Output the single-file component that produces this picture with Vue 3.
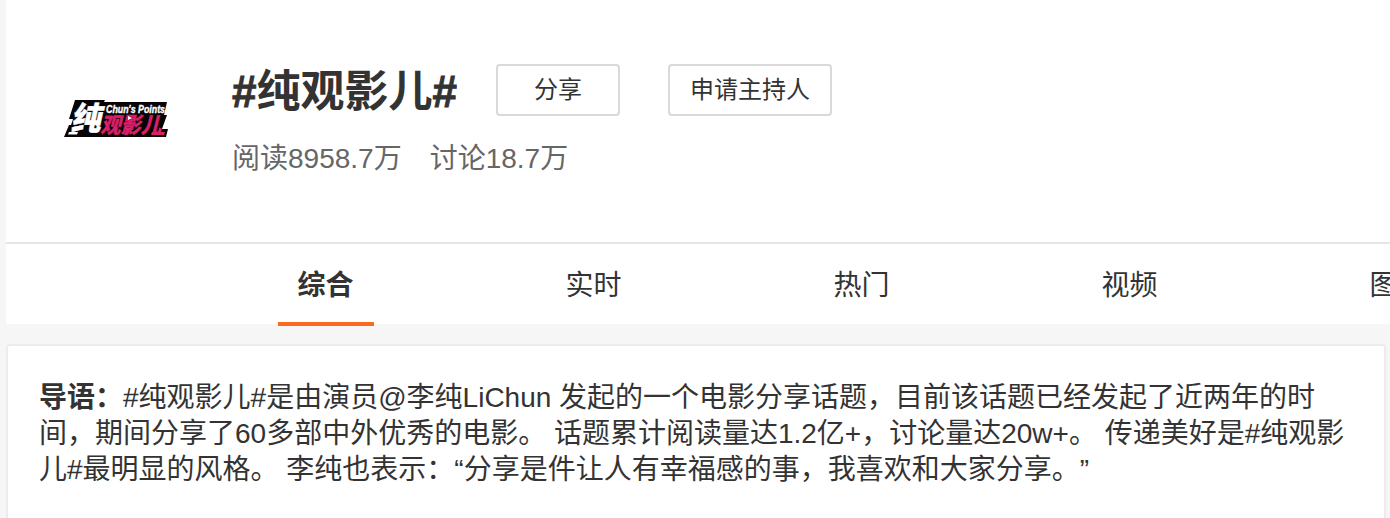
<script setup>
const tabs = ['综合', '实时', '热门', '视频', '图片']
const lines = [
  '#纯观影儿#是由演员@李纯LiChun 发起的一个电影分享话题，目前该话题已经发起了近两年的时',
  '间，期间分享了60多部中外优秀的电影。 话题累计阅读量达1.2亿+，讨论量达20w+。 传递美好是#纯观影',
  '儿#最明显的风格。 李纯也表示：“分享是件让人有幸福感的事，我喜欢和大家分享。”'
]
</script>

<template>
  <main class="page">
    <section class="panel">
      <header class="topic">
        <svg class="logo" viewBox="0 0 104 40" width="104" height="40">
          <path d="M11 1 H41 L40 3 H103 L100 16 H103 L98 30 H104 L102 38 H0 L5 26 H7 L9 20 H5 Z" fill="#080406" />
          <g transform="translate(6 33) skewX(-12)">
            <text class="cn white" transform="scale(.94 1)" x="0" y="-2" font-size="32">纯</text>
          </g>
          <path d="M5 33 H14 L13 35.5 H4 Z" fill="#fff" />
          <g transform="translate(36 35) skewX(-14)">
            <text class="cn pink" transform="scale(.92 1)" x="0" y="-1" font-size="22">观影儿</text>
          </g>
          <path d="M88 33 H101 L100 36 H87 Z" fill="#d82068" />
          <text class="en" x="42" y="13.5" font-size="11.5" textLength="59" lengthAdjust="spacingAndGlyphs">Chun's Points</text>
          <path d="M64 17 L68 19 L64 21 Z" fill="#fff" />
        </svg>
        <div class="info">
          <div class="heading">
            <h1><span class="hash">#</span>纯观影儿<span class="hash">#</span></h1>
            <button class="share">分享</button>
            <button class="host">申请主持人</button>
          </div>
          <div class="stats"><span>阅读8958.7万</span><span>讨论18.7万</span></div>
        </div>
      </header>
      <nav class="tabs">
        <a v-for="(t, i) in tabs" :key="t" :class="['tab', { active: i === 0 }]">{{ t }}</a>
      </nav>
    </section>
    <section class="intro">
      <p v-for="(l, i) in lines" :key="i"><b v-if="i === 0">导语：</b>{{ l }}</p>
    </section>
  </main>
</template>

<style>
body { margin: 0; background: #f6f6f6; overflow: hidden; }
</style>

<style scoped>
.page {
  box-sizing: border-box;
  height: 518px;
  padding-left: 6px;
  overflow: hidden;
  background: #f6f6f6;
  color: #333;
  font-family: "Liberation Sans", "Noto Sans CJK SC", sans-serif;
  text-spacing-trim: space-all;
}
.panel { height: 324px; background: #fff; }
.topic {
  box-sizing: border-box;
  height: 244px;
  display: flex;
  padding-left: 58px;
  border-bottom: 2px solid #e5e5e5;
}
.logo { flex: none; margin-top: 99px; overflow: visible; }
.cn { font-family: "Noto Sans CJK SC", sans-serif; font-weight: 900; }
.white { fill: #fff; stroke: #fff; stroke-width: .5; }
.pink { fill: #d82068; stroke: #d82068; stroke-width: .3; }
.en { font-family: "Liberation Sans", sans-serif; font-weight: 700; font-style: italic; fill: #fff; stroke: #fff; stroke-width: .4; }
.info { margin-left: 64px; padding-top: 64px; }
.heading { display: flex; height: 52px; align-items: center; }
h1 { margin: 0; padding-top: 3px; width: 264px; font-size: 44px; line-height: 52px; font-weight: 700; white-space: nowrap; }
.hash { -webkit-text-stroke: .9px #333; }
button {
  box-sizing: border-box;
  height: 52px;
  padding: 0;
  border: 2px solid #d9d9d9;
  border-radius: 4px;
  background: #fff;
  color: #333;
  font: 24px/48px "Liberation Sans", "Noto Sans CJK SC", sans-serif;
}
.share { width: 124px; margin-right: 48px; }
.host { width: 164px; }
.stats { display: flex; gap: 28px; margin-top: 25px; font-size: 28px; line-height: 36px; color: #666; }
.tabs { display: flex; height: 82px; padding-left: 272px; gap: 172px; overflow: hidden; }
.tab {
  box-sizing: border-box;
  flex: none;
  width: 96px;
  height: 82px;
  padding-right: 1px;
  text-align: center;
  font-size: 28px;
  line-height: 83px;
}
.active { font-weight: 700; border-bottom: 4px solid #fa6a20; }
.intro {
  box-sizing: border-box;
  width: 1380px;
  height: 200px;
  margin-top: 20px;
  padding: 34px 0 0 31px;
  border: 2px solid #ececec;
  border-radius: 4px;
  background: #fff;
}
p { margin: 0; font-size: 28px; line-height: 36px; white-space: nowrap; }
</style>
